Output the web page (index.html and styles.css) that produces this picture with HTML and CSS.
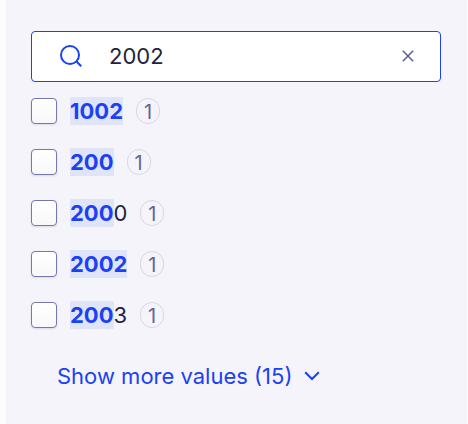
FILE: index.html
```
<!DOCTYPE html>
<html lang="en">
<head>
    <meta charset="UTF-8">
    <title>Facet values</title>
    <link rel="stylesheet" href="styles.css">
</head>
<body>
    <form class="facet">
        <div class="search-box">
            <svg class="search-icon" viewBox="0 0 22 22" aria-hidden="true">
                <circle cx="10" cy="10" r="9"/>
                <path d="M16.3 16.3L21.2 21.2"/>
            </svg>
            <input class="search-input" type="text" value="2002" aria-label="Search for values">
            <button class="clear" type="button" aria-label="Clear search">
                <svg viewBox="0 0 12 12" aria-hidden="true"><path d="M0.8 0.8L11.2 11.2M11.2 0.8L0.8 11.2"/></svg>
            </button>
        </div>

        <ul class="values">
            <li><label class="value"><input type="checkbox"><span class="name"><mark>1002</mark></span><span class="count">1</span></label></li>
            <li><label class="value"><input type="checkbox"><span class="name"><mark>200</mark></span><span class="count">1</span></label></li>
            <li><label class="value"><input type="checkbox"><span class="name"><mark>200</mark>0</span><span class="count">1</span></label></li>
            <li><label class="value"><input type="checkbox"><span class="name"><mark>2002</mark></span><span class="count">1</span></label></li>
            <li><label class="value"><input type="checkbox"><span class="name"><mark>200</mark>3</span><span class="count">1</span></label></li>
        </ul>

        <button class="more" type="button">
            Show more values (15)
            <svg viewBox="0 0 16 10" aria-hidden="true"><path d="M1.2 1.2L8 8L14.8 1.2"/></svg>
        </button>
    </form>
</body>
</html>
```

FILE: styles.css
```
* {
    box-sizing: border-box;
}
body {
    margin: 0;
    background: #fcfcfd;
    font-family: Inter, "Liberation Sans", sans-serif;
    font-size: 22px;
    color: #21243d;
}
button,
input {
    font: inherit;
    color: inherit;
}
svg {
    fill: none;
    stroke: currentColor;
}
.facet {
    min-height: 100vh;
    margin: 0 1px 0 6px;
    padding: 31px 26px 0 25px;
    background: #f5f4fa;
}

.search-box {
    display: flex;
    align-items: center;
    height: 51px;
    padding: 0 20px 2px 28px;
    border: 1px solid #1a41f3;
    border-radius: 4px;
    background: #fff;
}
.search-icon {
    flex: none;
    width: 22px;
    height: 22px;
    color: #1a41f3;
    stroke-width: 2;
}
.search-input {
    flex: 1;
    min-width: 0;
    height: 100%;
    margin-left: 27px;
    padding: 0;
    border: 0;
    outline: none;
    background: none;
}
.clear {
    display: flex;
    align-items: center;
    justify-content: center;
    width: 24px;
    height: 24px;
    padding: 0;
    border: 0;
    background: none;
    color: #5a5d8e;
    cursor: pointer;
}
.clear svg {
    width: 12px;
    height: 12px;
    stroke-width: 1.5;
}

.values {
    display: grid;
    gap: 24px;
    margin: 15px 0 0;
    padding: 0;
    list-style: none;
}
.value {
    display: flex;
    align-items: center;
    height: 27px;
    gap: 13px;
    cursor: pointer;
}
.value input {
    appearance: none;
    width: 26px;
    height: 26px;
    margin: 1px 0 0;
    border: 1px solid #7577ae;
    border-radius: 4px;
    background: linear-gradient(#fff, #f8f8fa);
    box-shadow: 0 1px 2px rgba(33, 36, 61, .12);
}
.value input:checked {
    background: #1a41f3;
}
.name {
    line-height: 28px;
}
.name mark {
    display: inline-block;
    background: #e0e4f9;
    color: #1a41f3;
    font-weight: 700;
}
.count {
    width: 24px;
    height: 26px;
    margin-top: 1px;
    border: 1px solid #d8d6e8;
    border-radius: 13px;
    color: #626599;
    font-size: 20px;
    line-height: 26px;
    text-align: center;
}

.more {
    display: flex;
    align-items: center;
    gap: 12px;
    margin: 35px 0 0 26px;
    padding: 0;
    border: 0;
    background: none;
    color: #1a41f3;
    cursor: pointer;
}
.more svg {
    width: 16px;
    height: 10px;
    stroke-width: 2;
}
```
